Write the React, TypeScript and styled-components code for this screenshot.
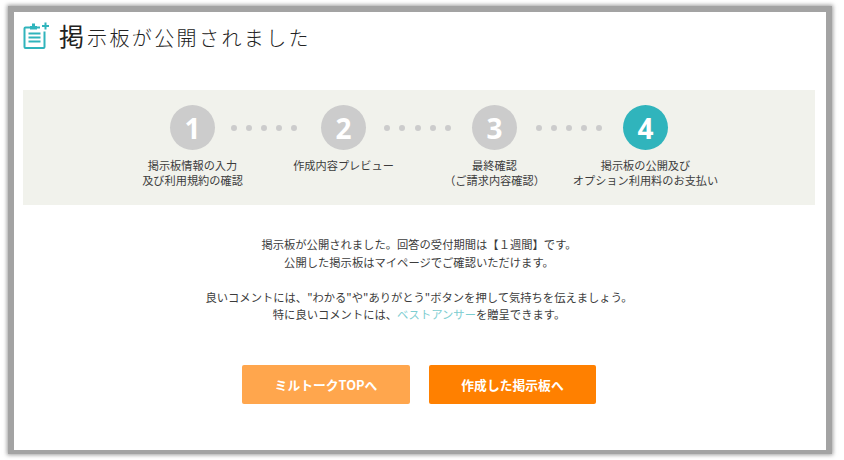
import React from "react";
import styled, { createGlobalStyle } from "styled-components";

const Global = createGlobalStyle`
  html, body { margin: 0; padding: 0; background: #fff; }
  body { font-family: "Noto Sans CJK JP", "Liberation Sans", sans-serif; color: #3c3c3c; }
`;

const Page = styled.div`
  width: 844px;
  height: 460px;
  box-sizing: border-box;
  padding: 6px 12px 6px 8px;
  overflow: hidden;
`;

const Panel = styled.main`
  box-sizing: border-box;
  width: 824px;
  height: 448px;
  background: #fff;
  border: 6px solid #a3a3a3;
  border-bottom-width: 4px;
  box-shadow: 0 0 4px 1px rgba(125, 125, 125, 0.75);
  padding: 10px 11px 0 9px;
`;

const Heading = styled.h1`
  margin: 0;
  height: 68px;
  display: flex;
  align-items: flex-start;
  gap: 8px;
  font-weight: 400;
  color: #222;
`;

const TitleIcon = styled.svg`
  width: 28px;
  height: 28px;
  flex: none;
`;

const TitleText = styled.span`
  font-size: 20px;
  line-height: 27px;
  letter-spacing: 2.4px;
  font-weight: 300;
  white-space: nowrap;
`;

const FirstChar = styled.span`
  font-size: 25px;
  letter-spacing: 3px;
  font-weight: 400;
`;

const StepBand = styled.section`
  height: 115px;
  background: #f1f2ec;
  padding-top: 15px;
  box-sizing: border-box;
`;

const CircleRow = styled.div`
  display: flex;
  justify-content: center;
  align-items: center;
`;

const Circle = styled.div<{ $active?: boolean }>`
  width: 45px;
  height: 45px;
  flex: none;
  border-radius: 50%;
  background: ${(p) => (p.$active ? "#30b4bc" : "#cccccc")};
  color: #fff;
  display: flex;
  align-items: center;
  justify-content: center;
  font-family: "Open Sans", "Liberation Sans", sans-serif;
  font-weight: 700;
  font-size: 28px;
  line-height: 1;
`;

const DotGroup = styled.div<{ $nudge: number }>`
  width: 106px;
  box-sizing: border-box;
  padding-right: ${(p) => p.$nudge}px;
  flex: none;
  display: flex;
  justify-content: center;
  gap: 9.2px;
`;

const Dot = styled.i`
  width: 6px;
  height: 6px;
  border-radius: 50%;
  background: #cccccc;
`;

const LabelRow = styled.div`
  display: grid;
  grid-template-columns: repeat(4, 151px);
  justify-content: center;
  margin-top: 8px;
`;

const StepLabel = styled.div`
  font-size: 11.2px;
  line-height: 15px;
  text-align: center;
  white-space: pre-line;
  color: #3c3c3c;
`;

const Message = styled.section`
  margin-top: 31px;
  font-size: 11.3px;
  line-height: 17.6px;
  text-align: center;
  color: #3c3c3c;
`;

const Para = styled.p`
  margin: 0 0 17.6px;
`;

const TextLink = styled.a`
  color: #7ccdd0;
  text-decoration: none;
`;

const Actions = styled.div`
  display: flex;
  justify-content: center;
  gap: 19px;
  margin-top: 41px;
`;

const ActionButton = styled.button<{ $strong?: boolean }>`
  height: 39px;
  width: ${(p) => (p.$strong ? "167px" : "168px")};
  border: 0;
  border-radius: 2px;
  background: ${(p) => (p.$strong ? "#ff8000" : "#ffa64d")};
  color: #fff;
  font-family: inherit;
  font-size: 12.8px;
  font-weight: 700;
  padding: 0;
`;

const steps = [
  "掲示板情報の入力\n及び利用規約の確認",
  "作成内容プレビュー",
  "最終確認\n（ご請求内容確認）",
  "掲示板の公開及び\nオプション利用料のお支払い",
];

const dotNudges = [8, 3, 2];

export default function App() {
  return (
    <Page>
      <Global />
      <Panel>
        <Heading>
          <TitleIcon viewBox="0 0 28 28" fill="none" stroke="#30b4bc">
            <path d="M7 5.5H2.5a1 1 0 0 0-1 1V25a1 1 0 0 0 1 1h18a1 1 0 0 0 1-1V9.5" strokeWidth="2" />
            <path d="M14 5.5h3" strokeWidth="2" />
            <path d="M7 6V4h2V1.5h3V4h2v3.5H7z" fill="#30b4bc" stroke="none" />
            <path d="M5.5 11.5h12M5.5 15.5h12M5.5 19.5h12" strokeWidth="2" />
            <path d="M22.5 0.5v7M19 4h7" strokeWidth="2" />
          </TitleIcon>
          <TitleText>
            <FirstChar>掲</FirstChar>示板が公開されました
          </TitleText>
        </Heading>
        <StepBand>
          <CircleRow>
            {[1, 2, 3, 4].map((n) => (
              <React.Fragment key={n}>
                <Circle $active={n === 4}>{n}</Circle>
                {n < 4 && (
                  <DotGroup $nudge={dotNudges[n - 1]}>
                    {[0, 1, 2, 3, 4].map((d) => (
                      <Dot key={d} />
                    ))}
                  </DotGroup>
                )}
              </React.Fragment>
            ))}
          </CircleRow>
          <LabelRow>
            {steps.map((s) => (
              <StepLabel key={s}>{s}</StepLabel>
            ))}
          </LabelRow>
        </StepBand>
        <Message>
          <Para>
            掲示板が公開されました。回答の受付期間は【１週間】です。
            <br />
            公開した掲示板はマイページでご確認いただけます。
          </Para>
          <Para>
            良いコメントには、"わかる"や"ありがとう"ボタンを押して気持ちを伝えましょう。
            <br />
            特に良いコメントには、<TextLink href="#">ベストアンサー</TextLink>を贈呈できます。
          </Para>
        </Message>
        <Actions>
          <ActionButton>ミルトークTOPへ</ActionButton>
          <ActionButton $strong>作成した掲示板へ</ActionButton>
        </Actions>
      </Panel>
    </Page>
  );
}
